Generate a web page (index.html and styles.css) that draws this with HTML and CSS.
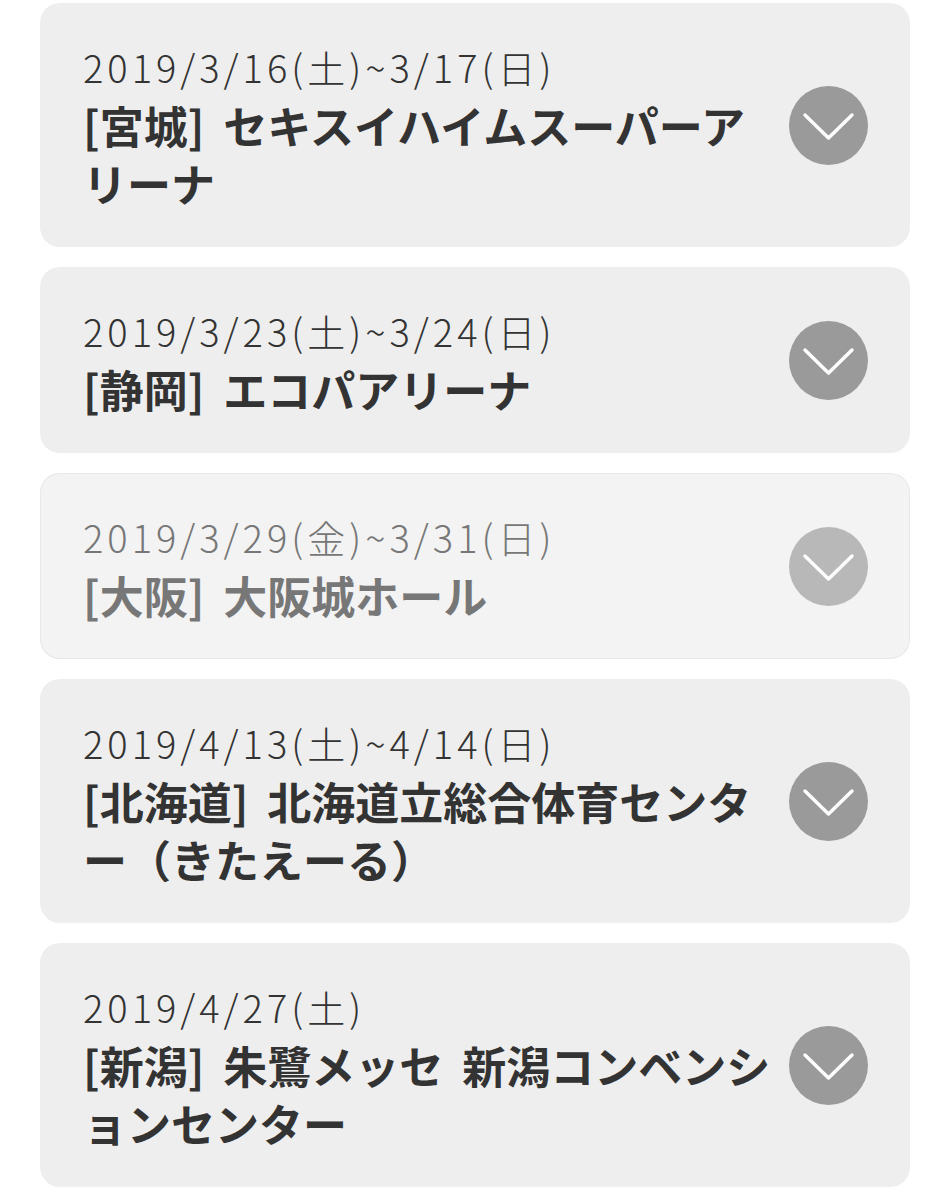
FILE: index.html
```html
<!DOCTYPE html>
<html lang="ja">
<head>
    <meta charset="UTF-8">
    <meta name="viewport" content="width=device-width, initial-scale=1.0">
    <title>公演スケジュール</title>
    <link rel="stylesheet" href="styles.css">
</head>
<body>

    <!-- Tour schedule list -->
    <div class="schedule">
        <div class="event">
            <div class="event-text">
                <div class="event-date">2019/3/16(土)~3/17(日)</div>
                <div class="event-venue">[宮城] セキスイハイムスーパーアリーナ</div>
            </div>
            <span class="toggle">
                <svg viewBox="0 0 79 79" width="79" height="79"><polyline points="16,29 39.5,52 63,29"/></svg>
            </span>
        </div>

        <div class="event">
            <div class="event-text">
                <div class="event-date">2019/3/23(土)~3/24(日)</div>
                <div class="event-venue">[静岡] エコパアリーナ</div>
            </div>
            <span class="toggle">
                <svg viewBox="0 0 79 79" width="79" height="79"><polyline points="16,29 39.5,52 63,29"/></svg>
            </span>
        </div>

        <div class="event past">
            <div class="event-text">
                <div class="event-date">2019/3/29(金)~3/31(日)</div>
                <div class="event-venue">[大阪] 大阪城ホール</div>
            </div>
            <span class="toggle">
                <svg viewBox="0 0 79 79" width="79" height="79"><polyline points="16,29 39.5,52 63,29"/></svg>
            </span>
        </div>

        <div class="event">
            <div class="event-text">
                <div class="event-date">2019/4/13(土)~4/14(日)</div>
                <div class="event-venue">[北海道] 北海道立総合体育センター（きたえーる）</div>
            </div>
            <span class="toggle">
                <svg viewBox="0 0 79 79" width="79" height="79"><polyline points="16,29 39.5,52 63,29"/></svg>
            </span>
        </div>

        <div class="event">
            <div class="event-text">
                <div class="event-date">2019/4/27(土)</div>
                <div class="event-venue">[新潟] 朱鷺メッセ 新潟コンベンションセンター</div>
            </div>
            <span class="toggle">
                <svg viewBox="0 0 79 79" width="79" height="79"><polyline points="16,29 39.5,52 63,29"/></svg>
            </span>
        </div>
    </div>

</body>
</html>
```

FILE: styles.css
```css
body {
    margin: 0;
    background-color: #fff;
    font-family: "Noto Sans CJK JP", "Noto Sans", sans-serif;
    color: #333;
}
.schedule {
    display: flex;
    flex-direction: column;
    gap: 20px;
    padding: 3px 40px 0;
}
.event {
    display: flex;
    align-items: center;
    gap: 12px;
    padding: 35px 42px 35px 43px;
    background-color: #eeeeee;
    border-radius: 20px;
}
.event-text {
    flex: 1;
    line-height: 58px;
}
.event-date {
    font-size: 38px;
    font-weight: 300;
    letter-spacing: 4px;
}
.event-venue {
    font-size: 44px;
    font-weight: 700;
    word-spacing: 9px;
}
.toggle {
    flex: none;
    width: 79px;
    height: 79px;
    border-radius: 50%;
    background-color: #9a9a9a;
}
.toggle svg {
    display: block;
}
.toggle polyline {
    fill: none;
    stroke: #fff;
    stroke-width: 3.5;
    stroke-linecap: round;
    stroke-linejoin: round;
}

.event.past {
    background-color: #f3f3f3;
    box-shadow: inset 0 0 0 1px #e8e8e8;
    color: #777;
}
.event.past .toggle {
    background-color: #b8b8b8;
}
```
